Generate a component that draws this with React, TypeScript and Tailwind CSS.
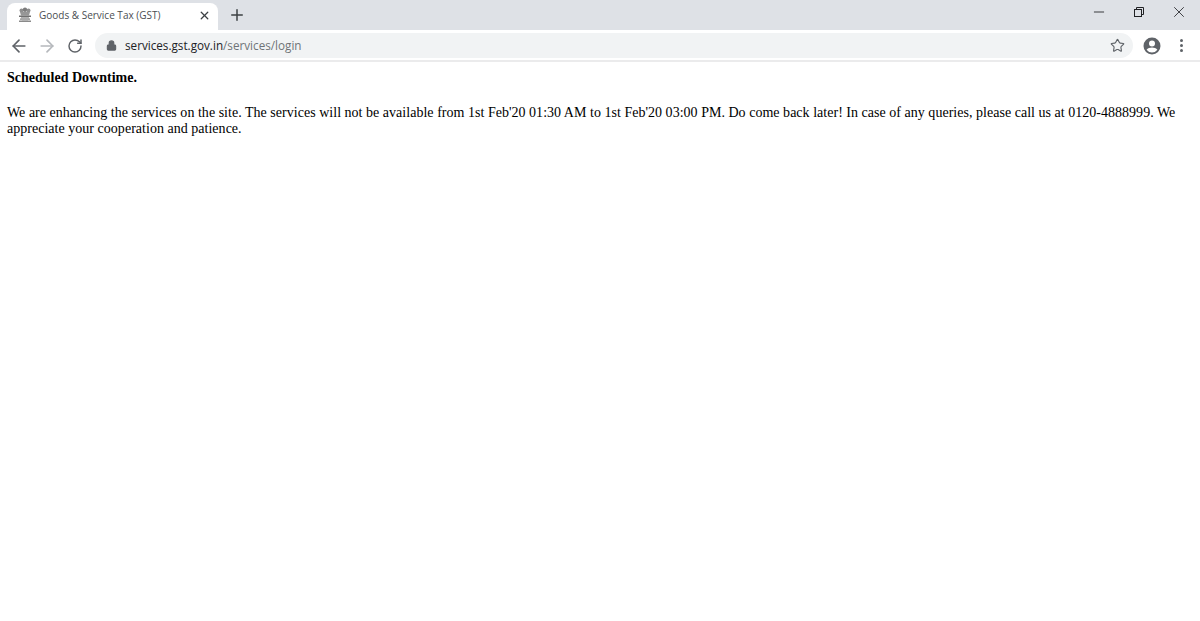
import { ArrowLeft, ArrowRight, RotateCw, Lock, Star, Minus, X, Plus } from 'lucide-react';

function Emblem() {
  return (
    <svg width="16" height="16" viewBox="0 0 16 16" className="shrink-0">
      <circle cx="4.500" cy="3.500" r="2" fill="#8f8f8f" />
      <circle cx="8" cy="2.800" r="2.200" fill="#7c7c7c" />
      <circle cx="11.500" cy="3.500" r="2" fill="#8f8f8f" />
      <path d="M3 5h10l-1 3.500H4Z" fill="#969696" />
      <rect x="2" y="8.500" width="12" height="1.500" fill="#6f6f6f" />
      <path d="M4 10h8v1.500H4Z" fill="#b0b0b0" />
      <path d="M3 11.500h10v1.200H3Z" fill="#7d7d7d" />
      <path d="M5 12.700h6v.8H5Z" fill="#b5b5b5" />
      <rect x="2" y="13.500" width="12" height="1.500" fill="#8a8a8a" />
    </svg>
  );
}

function Profile() {
  return (
    <svg width="20" height="20" viewBox="0 0 20 20">
      <path
        fill="#5f6368"
        d="M10 1.500a8.500 8.500 0 1 0 0 17 8.500 8.500 0 0 0 0-17Zm0 3a3 3 0 1 1 0 6 3 3 0 0 1 0-6Zm0 12a6.600 6.600 0 0 1-5.400-2.800c1-1.500 3.500-2.200 5.400-2.200s4.400.7 5.400 2.200A6.600 6.600 0 0 1 10 16.500Z"
      />
    </svg>
  );
}

function RestoreIcon() {
  return (
    <svg width="10" height="10" viewBox="0 0 10 10" fill="none" stroke="#202124" strokeWidth="1">
      <rect x="0.500" y="2.500" width="7" height="7" />
      <path d="M2.500 2.500V0.500H9.500V7.500H7.500" />
    </svg>
  );
}

export default function App() {
  return (
    <div className="min-h-[621px] bg-white font-['Liberation_Serif',serif]">
      <div className="flex h-[30px] items-end bg-[#dee1e6] font-['Open_Sans',sans-serif]">
        <div className="ml-[7px] flex h-[27px] w-[211px] items-center rounded-t-lg bg-white pb-[3px] pl-[10px] pr-[7px]">
          <Emblem />
          <span className="ml-[6px] flex-1 truncate text-[10px] text-[#4b4e52]">Goods &amp; Service Tax (GST)</span>
          <X size={13} strokeWidth={2.400} className="text-[#3c4043]" />
        </div>
        <Plus size={18} strokeWidth={2} className="mb-[6px] ml-[10px] text-[#3c4043]" />
        <div className="ml-auto mr-[1px] mt-[4px] flex items-center self-start">
          <div className="flex h-[16px] w-[40px] items-center justify-center"><Minus size={16} strokeWidth={1.300} className="text-[#202124]" /></div>
          <div className="flex h-[16px] w-[40px] items-center justify-center"><RestoreIcon /></div>
          <div className="flex h-[16px] w-[40px] items-center justify-center"><X size={18} strokeWidth={1.100} className="text-[#202124]" /></div>
        </div>
      </div>
      <div className="flex h-[32px] items-center border-b-2 border-[#ebebec] pl-[9px] pt-[1px]">
        <ArrowLeft size={20} strokeWidth={2} className="text-[#5f6368]" />
        <ArrowRight size={20} strokeWidth={2} className="ml-[8px] text-[#b5b8bc]" />
        <RotateCw size={16} strokeWidth={2.200} className="ml-[10px] text-[#5f6368]" />
        <div className="ml-[12px] flex h-[25px] w-[1038px] items-center rounded-full bg-[#f1f3f4] pl-[11px] pr-[8px] font-['Open_Sans',sans-serif]">
          <Lock size={11} strokeWidth={2.500} fill="#5f6368" className="text-[#5f6368]" />
          <span className="ml-[8px] text-[11.700px] text-[#202124]">
            services.gst.gov.in<span className="text-[#6f7377]">/services/login</span>
          </span>
          <Star size={15} strokeWidth={1.800} className="ml-auto text-[#5f6368]" />
        </div>
        <div className="ml-[9px]"><Profile /></div>
        <div className="ml-[18px] flex flex-col gap-[2px]">
          <span className="h-[3px] w-[3px] rounded-full bg-[#5f6368]" />
          <span className="h-[3px] w-[3px] rounded-full bg-[#5f6368]" />
          <span className="h-[3px] w-[3px] rounded-full bg-[#5f6368]" />
        </div>
      </div>
      <div className="px-[7px] pt-[8px] text-[14px] leading-[16px] text-black">
        <p className="font-bold">Scheduled Downtime.</p>
        <p className="mt-[19px] tracking-[0.025px]">
          We are enhancing the services on the site. The services will not be available from 1st Feb'20 01:30 AM to 1st Feb'20 03:00 PM. Do come back later! In case of any queries, please call us at 0120-4888999. We appreciate your cooperation and patience.
        </p>
      </div>
    </div>
  );
}
